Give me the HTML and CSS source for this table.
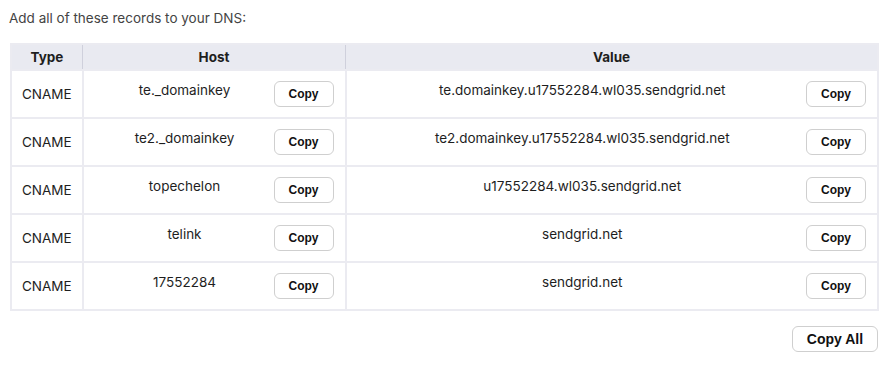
FILE: index.html
```html
<!DOCTYPE html>
<html lang="en">
<head>
    <meta charset="UTF-8">
    <title>DNS Records</title>
    <link rel="stylesheet" href="styles.css">
</head>
<body>
    <div class="dns">
        <p class="intro">Add all of these records to your DNS:</p>

        <table class="records">
            <thead>
                <tr>
                    <th class="col-type">Type</th>
                    <th class="col-host">Host</th>
                    <th class="col-value">Value</th>
                </tr>
            </thead>
            <tbody>
                <tr>
                    <td class="type">CNAME</td>
                    <td><div class="cell"><span class="val">te._domainkey</span><button class="btn">Copy</button></div></td>
                    <td><div class="cell"><span class="val">te.domainkey.u17552284.wl035.sendgrid.net</span><button class="btn">Copy</button></div></td>
                </tr>
                <tr>
                    <td class="type">CNAME</td>
                    <td><div class="cell"><span class="val">te2._domainkey</span><button class="btn">Copy</button></div></td>
                    <td><div class="cell"><span class="val">te2.domainkey.u17552284.wl035.sendgrid.net</span><button class="btn">Copy</button></div></td>
                </tr>
                <tr>
                    <td class="type">CNAME</td>
                    <td><div class="cell"><span class="val">topechelon</span><button class="btn">Copy</button></div></td>
                    <td><div class="cell"><span class="val">u17552284.wl035.sendgrid.net</span><button class="btn">Copy</button></div></td>
                </tr>
                <tr>
                    <td class="type">CNAME</td>
                    <td><div class="cell"><span class="val">telink</span><button class="btn">Copy</button></div></td>
                    <td><div class="cell"><span class="val">sendgrid.net</span><button class="btn">Copy</button></div></td>
                </tr>
                <tr>
                    <td class="type">CNAME</td>
                    <td><div class="cell"><span class="val">17552284</span><button class="btn">Copy</button></div></td>
                    <td><div class="cell"><span class="val">sendgrid.net</span><button class="btn">Copy</button></div></td>
                </tr>
            </tbody>
        </table>

        <div class="actions">
            <button class="btn btn-all">Copy All</button>
        </div>
    </div>
</body>
</html>
```

FILE: styles.css
```css
body {
    margin: 0;
    font-family: Inter, "Noto Sans", sans-serif;
    font-size: 13.5px;
    color: #1e1e1e;
    background: #fff;
}

.dns {
    padding: 9px 15px 0 9px;
}

.intro {
    margin: 0 0 16px 0;
    color: #444;
    line-height: 18px;
}

.records {
    width: 869px;
    margin-left: 1px;
    border-collapse: collapse;
    border: 2px solid #ebebf1;
}

.records th {
    background-color: #e9eaf1;
    height: 24px;
    font-weight: 700;
    font-size: 13.5px;
    border-bottom: 1px solid #cfd0dc;
    border-left: 1px solid #cfd0dc;
    padding: 0;
}

.records th:first-child {
    border-left: none;
}

.col-type {
    width: 70px;
}

.col-host {
    width: 262px;
}

.records td {
    height: 46px;
    padding: 0;
    border: 2px solid #ebebf1;
    text-align: center;
}

.cell {
    display: flex;
    align-items: center;
    padding: 0 11px 0 12px;
}

.val {
    flex: 1;
    text-align: center;
    margin-top: -9px;
}

.btn {
    font-family: "Liberation Sans", Arial, sans-serif;
    font-weight: 700;
    font-size: 12px;
    color: #111;
    background: #fff;
    border: 1px solid #cfcfcf;
    border-radius: 6px;
    width: 60px;
    height: 26px;
    padding: 0;
    cursor: pointer;
}

.actions {
    display: flex;
    justify-content: flex-end;
    margin-top: 15px;
}

.btn-all {
    width: 86px;
    font-size: 14px;
}
```
